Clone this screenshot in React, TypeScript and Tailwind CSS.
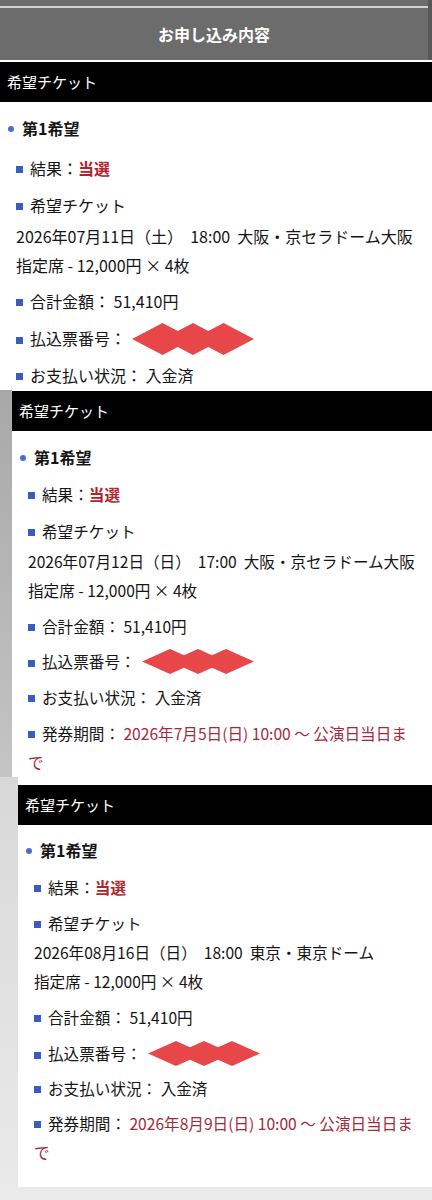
import React from 'react';

type Gaps = {
  first: string;
  result: string;
  ticket: string;
  date: string;
  total: string;
  pay: string;
  status: string;
  issue: string;
};

type Entry = {
  outer: string;
  box: string;
  text: string;
  gaps: Gaps;
  date: string;
  issue?: string;
  diamond: { w: number; h: number };
};

const entries: Entry[] = [
  {
    outer: '',
    box: 'bg-white',
    text: 'text-[16px]',
    gaps: { first: 'pt-[12px]', result: 'mt-[11px]', ticket: 'mt-[8px]', date: 'mt-[2px]', total: 'mt-[7px]', pay: 'mt-[8px]', status: 'mt-[8px]', issue: 'mt-[8px]' },
    date: '2026年07月11日（土）  18:00  大阪・京セラドーム大阪',
    diamond: { w: 122, h: 32 },
  },
  {
    outer: 'pl-[12px] bg-gradient-to-b from-[#a8a8a8] to-[#c4c4c4]',
    box: 'bg-white pt-[1px]',
    text: 'text-[15.6px]',
    gaps: { first: 'pt-[12px]', result: 'mt-[8px]', ticket: 'mt-[8px]', date: 'mt-[1px]', total: 'mt-[7px]', pay: 'mt-[6px]', status: 'mt-[7px]', issue: 'mt-[7px]' },
    date: '2026年07月12日（日）  17:00  大阪・京セラドーム大阪',
    issue: '2026年7月5日(日) 10:00 〜 公演日当日ま',
    diamond: { w: 112, h: 25 },
  },
  {
    outer: 'pl-[18px] pb-[13px] bg-gradient-to-b from-[#d8d8d8] to-[#eaeaea]',
    box: 'bg-white pt-[8px] pb-[20px]',
    text: 'text-[15.6px]',
    gaps: { first: 'pt-[11px]', result: 'mt-[8px]', ticket: 'mt-[7px]', date: 'mt-[0px]', total: 'mt-[7px]', pay: 'mt-[7px]', status: 'mt-[6px]', issue: 'mt-[6px]' },
    date: '2026年08月16日（日）  18:00  東京・東京ドーム',
    issue: '2026年8月9日(日) 10:00 〜 公演日当日ま',
    diamond: { w: 112, h: 25 },
  },
];

function Square() {
  return <span className="inline-block w-[7px] h-[7px] bg-[#3a5cc0] mr-[7px] align-[2px]" />;
}

// redaction marks drawn over the payment number
function Diamonds({ w, h }: { w: number; h: number }) {
  const half = w / 4;
  const pts = [0, 1, 2].map((i) => {
    const cx = half * (i + 1);
    return `${cx - half},${h / 2} ${cx},0 ${cx + half},${h / 2} ${cx},${h}`;
  });
  return (
    <svg width={w} height={h} viewBox={`0 0 ${w} ${h}`} className="shrink-0 ml-[6px]">
      {pts.map((p, i) => (
        <polygon key={i} points={p} fill="#e8474a" />
      ))}
    </svg>
  );
}

function Ticket({ e }: { e: Entry }) {
  const g = e.gaps;
  return (
    <div className={e.outer}>
      <div className={e.box}>
        <div className="h-[40px] bg-black flex items-center pl-[7px] text-white text-[15px]">希望チケット</div>
        <div className={`${e.text} leading-[29px] text-[#151515] pr-[10px]`}>
          <div className={`${g.first} pl-[8px] flex items-center font-bold text-[16px]`}>
            <span className="w-[6px] h-[6px] rounded-full bg-[#4a6fcb] mr-[8px]" />
            第1希望
          </div>
          <div className="pl-[16px]">
            <div className={g.result}>
              <Square />
              結果：<span className="font-bold text-[#b3222c]">当選</span>
            </div>
            <div className={g.ticket}>
              <Square />
              希望チケット
            </div>
            <div className={`${g.date} whitespace-pre`}>{e.date}</div>
            <div className="whitespace-pre">指定席 - 12,000円 × 4枚</div>
            <div className={`${g.total} whitespace-pre`}>
              <Square />
              合計金額： 51,410円
            </div>
            <div className={`${g.pay} h-[29px] flex items-center`}>
              <span className="w-[7px] h-[7px] bg-[#3a5cc0] mr-[7px] mt-[3px]" />
              払込票番号：
              <Diamonds w={e.diamond.w} h={e.diamond.h} />
            </div>
            <div className={`${g.status} whitespace-pre`}>
              <Square />
              お支払い状況： 入金済
            </div>
            {e.issue && (
              <div className={g.issue}>
                <span className="whitespace-pre">
                  <Square />
                  発券期間： <span className="text-[#a22a3b]">{e.issue}</span>
                </span>
                <br />
                <span className="text-[#a22a3b]">で</span>
              </div>
            )}
          </div>
        </div>
      </div>
    </div>
  );
}

export default function App() {
  return (
    <div className="w-[432px] min-h-[1200px] bg-[#ececec] font-['Noto_Sans_CJK_JP','Noto_Sans',sans-serif]">
      <div className="bg-[#6c6c6c] border-r-[4px] border-[#585858]">
        <div className="h-[6px]" />
        <div className="h-[2px] bg-[#d2d2d2]" />
        <div className="h-[52px] flex items-center justify-center text-white font-bold text-[16px]">お申し込み内容</div>
      </div>
      <div className="h-[2px] bg-white" />
      {entries.map((e, i) => (
        <Ticket key={i} e={e} />
      ))}
    </div>
  );
}
